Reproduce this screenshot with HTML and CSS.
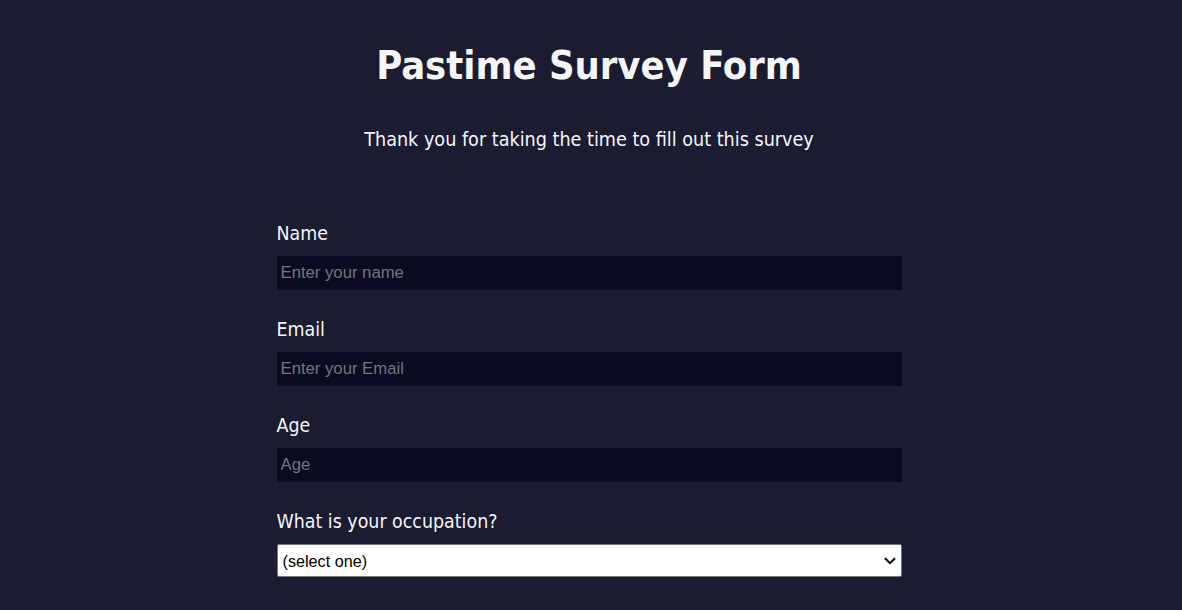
FILE: index.html
```html
<!DOCTYPE html>
<html lang="en">
<head>
<meta charset="utf-8">
<title>Pastime Survey Form</title>
<link rel="stylesheet" href="styles.css">
</head>
<body>
<h1 class="title">Pastime Survey Form</h1>
<p class="description">Thank you for taking the time to fill out this survey</p>
<form class="survey">
  <div class="group">
    <label class="label" for="name">Name</label>
    <input class="field" id="name" type="text" placeholder="Enter your name">
  </div>
  <div class="group">
    <label class="label" for="email">Email</label>
    <input class="field" id="email" type="email" placeholder="Enter your Email">
  </div>
  <div class="group">
    <label class="label" for="age">Age</label>
    <input class="field" id="age" type="number" placeholder="Age">
  </div>
  <div class="group">
    <label class="label" for="occ">What is your occupation?</label>
    <div class="select-wrap">
      <select class="select" id="occ">
        <option>(select one)</option>
      </select>
      <svg class="chevron" width="12" height="8" viewBox="0 0 12 8" aria-hidden="true">
        <path d="M1 1.2 L6 6.2 L11 1.2" fill="none" stroke="#000" stroke-width="2"/>
      </svg>
    </div>
  </div>
</form>
</body>
</html>
```

FILE: styles.css
```css
html, body {
  margin: 0;
  padding: 0;
}
body {
  background: #1b1b32;
  color: #f5f6f7;
  font-family: Tahoma, "DejaVu Sans Condensed", "DejaVu Sans", sans-serif;
  padding-right: 4px;
}
.title {
  margin: 0;
  padding-top: 41px;
  font-size: 39.5px;
  line-height: 48px;
  text-align: center;
  font-weight: bold;
}
.description {
  margin: 39px 0 0;
  font-size: 19.6px;
  line-height: 24px;
  text-align: center;
}
.survey {
  width: 625px;
  margin: 70px auto 0;
  display: flex;
  flex-direction: column;
  gap: 28px;
}
.group {
  display: flex;
  flex-direction: column;
  gap: 10px;
}
.label {
  font-size: 19.4px;
  line-height: 24px;
}
.field {
  box-sizing: border-box;
  height: 34px;
  margin: 0;
  border: 0;
  background: #0a0a23;
  color: #f5f6f7;
  padding: 0 4px;
  font-family: "Liberation Sans", Arial, sans-serif;
  font-size: 16.7px;
  outline: none;
}
.field::placeholder {
  color: #757575;
}
.select-wrap {
  position: relative;
  display: flex;
}
.select {
  flex: 1;
  box-sizing: border-box;
  height: 33px;
  margin: 0;
  background: #fff;
  color: #000;
  border: 1px solid #767676;
  border-radius: 2px;
  font-family: "Liberation Sans", Arial, sans-serif;
  font-size: 16.2px;
  padding: 0 5px;
  appearance: none;
  -webkit-appearance: none;
}
.chevron {
  position: absolute;
  right: 6px;
  top: 13px;
  pointer-events: none;
}
```
